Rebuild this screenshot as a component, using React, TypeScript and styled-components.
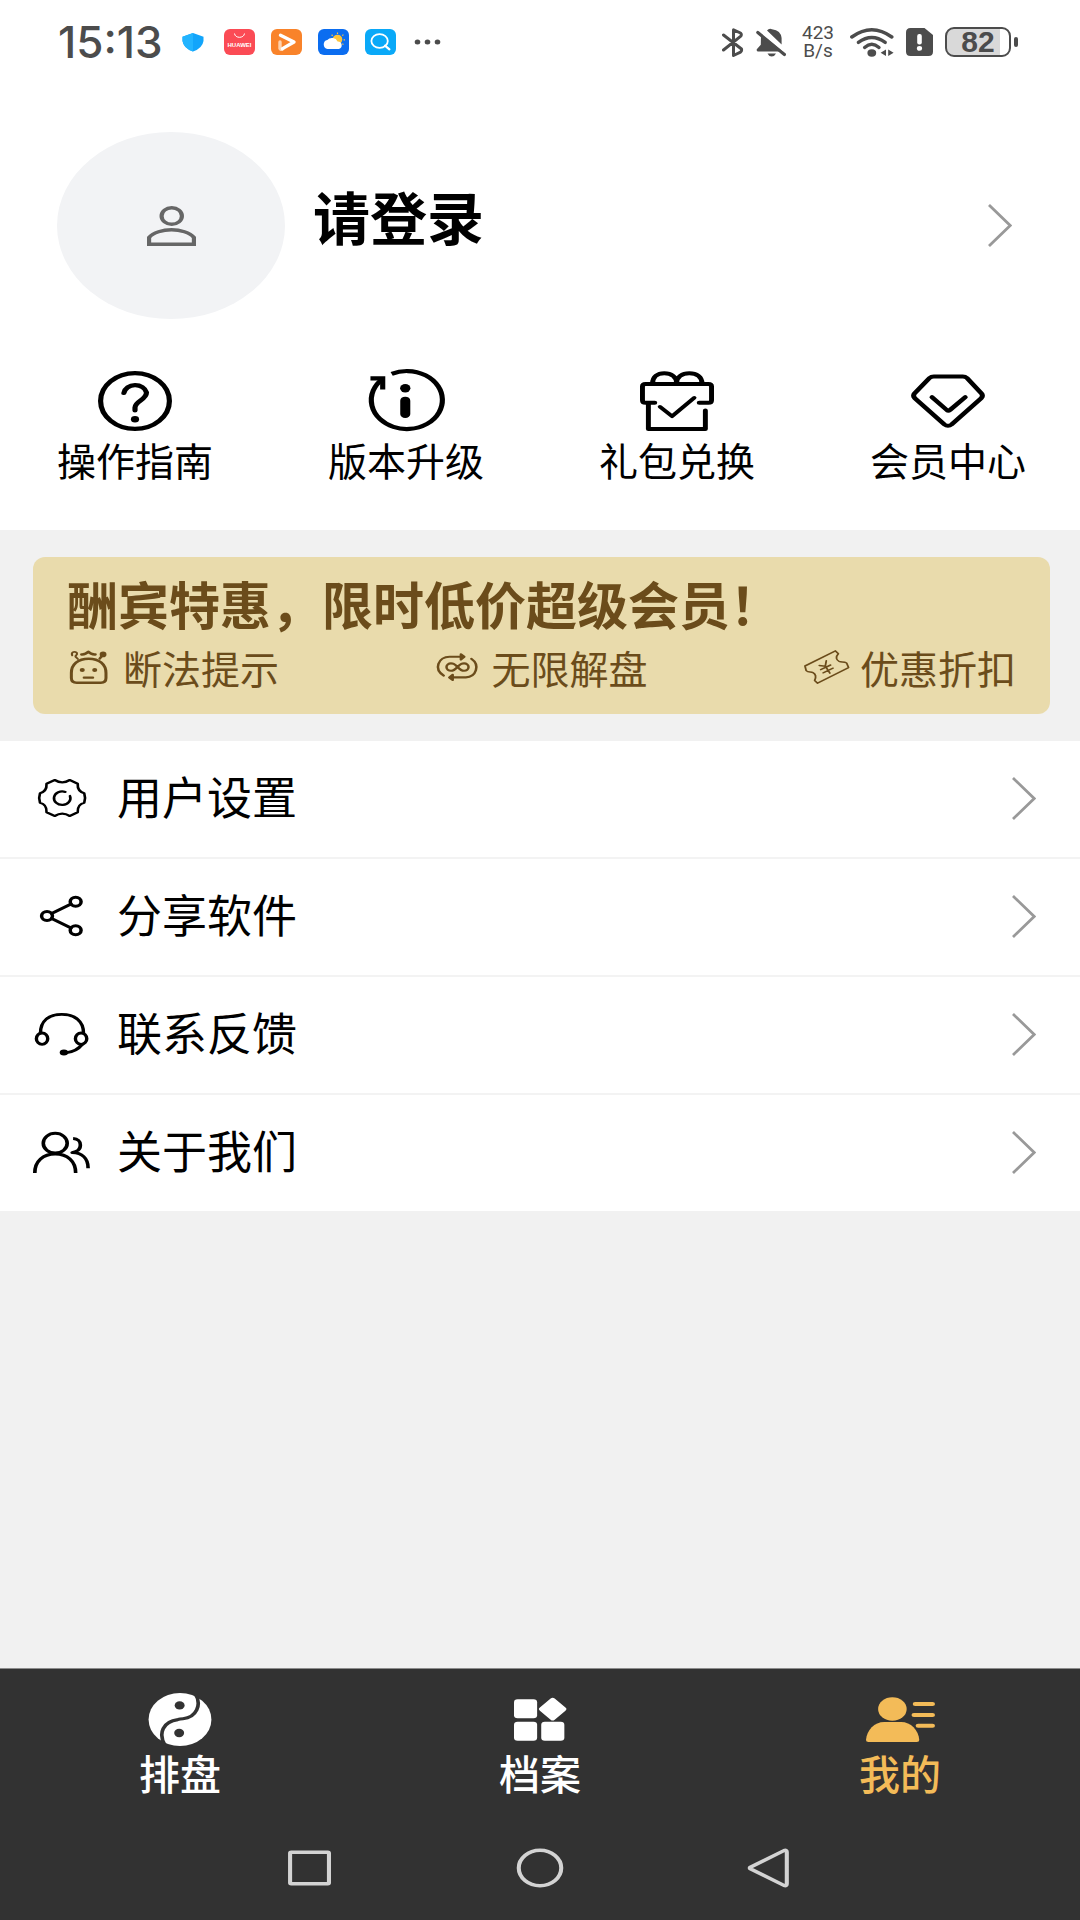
import React from "react";
import styled, { createGlobalStyle } from "styled-components";

const cjk = `"Noto Sans CJK SC", "Noto Sans", sans-serif`;

const GlobalStyle = createGlobalStyle`
  *, *::before, *::after { box-sizing: border-box; }
  body { margin: 0; background: #f1f1f1; font-family: ${cjk}; color: #000; }
  button { appearance: none; border: 0; margin: 0; padding: 0; background: none; font: inherit; color: inherit; cursor: pointer; }
  a { color: inherit; text-decoration: none; }
  svg { display: block; flex: none; }
`;

const Page = styled.div`
  min-height: 100vh;
  display: flex;
  flex-direction: column;
`;

const Header = styled.header`
  background: #fff;
`;

const StatusBar = styled.div`
  height: 84px;
  padding: 0 62px 0 58px;
  display: flex;
  justify-content: space-between;
  align-items: center;
  color: #4c4c4c;
`;

const StatusGroup = styled.div<{ $gap: number }>`
  display: flex;
  align-items: center;
  gap: ${(p) => p.$gap}px;
`;

const Clock = styled.time`
  margin-right: 3px;
  font: 500 44px/44px Inter, Roboto, sans-serif;
`;

const Speed = styled.div`
  width: 40px;
  font: 400 19px/18px Roboto, sans-serif;
  text-align: center;
`;

const SpeedLine = styled.div`
  height: 18px;
`;

const BatteryWrap = styled.div`
  display: flex;
  align-items: center;
  gap: 3px;
  &::after {
    content: "";
    width: 4px;
    height: 10px;
    border-radius: 2px;
    background: #4c4c4c;
  }
`;

const Battery = styled.div`
  width: 66px;
  height: 30px;
  border: 2px solid #4c4c4c;
  border-radius: 9px;
  background: linear-gradient(90deg, #d9d9d9 86%, #fff 86%);
  font: 700 30px/26px "Liberation Sans", sans-serif;
  text-align: center;
`;

const Profile = styled.button`
  width: 100%;
  padding: 48px 68px 0 57px;
  display: flex;
  align-items: center;
  gap: 28px;
  text-align: left;
`;

const Avatar = styled.span`
  width: 228px;
  height: 187px;
  border-radius: 50%;
  background: #f2f3f5;
  color: #666;
  display: flex;
  align-items: center;
  justify-content: center;
`;

const LoginText = styled.span`
  flex: 1;
  padding-bottom: 22px;
  font-size: 57px;
  line-height: 64px;
  font-weight: 700;
`;

const QuickActions = styled.nav`
  padding: 52px 54px 49px 57px;
  display: flex;
  justify-content: space-between;
`;

const QuickAction = styled.button`
  display: flex;
  flex-direction: column;
  align-items: center;
  gap: 6px;
  font-size: 39px;
  line-height: 44px;
`;

const BannerWrap = styled.section`
  padding: 27px 30px 27px 33px;
`;

const Banner = styled.a`
  display: block;
  padding: 16px 34px 25px;
  border-radius: 12px;
  background: #e9dbac;
  color: #6b4c1b;
`;

const BannerTitle = styled.h2`
  margin: 0 0 12px;
  font-size: 51px;
  line-height: 60px;
  font-weight: 700;
  white-space: nowrap;
`;

const Features = styled.ul`
  margin: 0;
  padding: 0;
  list-style: none;
  display: flex;
  justify-content: space-between;
`;

const Feature = styled.li`
  display: flex;
  align-items: center;
  gap: 10px;
  font-size: 39px;
  line-height: 44px;
`;

const Menu = styled.nav`
  background: #fff;
`;

const MenuRow = styled.button`
  width: 100%;
  height: 118px;
  padding: 0 44px 2px 33px;
  display: flex;
  align-items: center;
  gap: 26px;
  text-align: left;
  border-bottom: 2px solid #f3f3f3;
  &:last-child {
    height: 116px;
    border-bottom: 0;
  }
`;

const MenuLabel = styled.span`
  flex: 1;
  padding-bottom: 4px;
  font-size: 45px;
  line-height: 52px;
`;

const Spacer = styled.main`
  flex: 1;
`;

const BottomBar = styled.footer`
  background: #323232;
  border-top: 1px solid #8c8c8c;
`;

const Tabs = styled.nav`
  display: flex;
  padding-top: 23px;
`;

const Tab = styled.a<{ $active?: boolean }>`
  flex: 1;
  display: flex;
  flex-direction: column;
  align-items: center;
  gap: 2px;
  font-size: 41px;
  line-height: 48px;
  font-weight: 500;
  color: ${(p) => (p.$active ? "#f3bb58" : "#fff")};
`;

const TabIcon = styled.span`
  height: 54px;
  display: flex;
  align-items: center;
`;

const SystemNav = styled.div`
  display: flex;
  justify-content: center;
  gap: 182px;
  padding: 52px 0 32px;
  color: #d3d3d3;
`;

type IconProps = {
  w: number;
  h: number;
  box: string;
  stroke?: number;
  children: React.ReactNode;
};

/* Line icon; the drawing fills its box, so the artwork is wider than tall. */
const Line = ({ w, h, box, stroke = 2, children }: IconProps) => (
  <svg
    width={w}
    height={h}
    viewBox={box}
    preserveAspectRatio="none"
    fill="none"
    stroke="currentColor"
    strokeWidth={stroke}
    strokeLinecap="round"
    strokeLinejoin="round"
    overflow="visible"
    aria-hidden="true"
  >
    {children}
  </svg>
);

const Solid = ({ w, h, box, children }: IconProps) => (
  <svg width={w} height={h} viewBox={box} preserveAspectRatio="none" fill="currentColor" aria-hidden="true">
    {children}
  </svg>
);

const Chevron = () => (
  <svg width="24" height="43" viewBox="0 0 24 43" fill="none" stroke="#999" strokeWidth="2.8" aria-hidden="true">
    <path d="M1 1 L22.2 21.5 L1 42" />
  </svg>
);

const quickActions = [
  {
    label: "操作指南",
    icon: (
      <Line w={74} h={60} box="0 0 60 60" stroke={4.2}>
        <circle cx="30" cy="30" r="27.9" />
        <path d="M21 22 A9.3 9.3 0 0 1 39.3 21.5 C39.3 29 30 30 30 36.5 V39.5" />
        <circle cx="30" cy="48.3" r="3.3" fill="currentColor" stroke="none" />
      </Line>
    ),
  },
  {
    label: "版本升级",
    icon: (
      <Line w={76} h={60} box="1 0 62 60" stroke={4.2}>
        <path d="M20.3 2.8 A29 29 0 1 1 12.5 8.2" strokeLinecap="butt" />
        <path d="M3 7.3 H13 V18.5" strokeLinecap="butt" strokeLinejoin="miter" />
        <circle cx="31.4" cy="17.3" r="4.2" fill="currentColor" stroke="none" />
        <rect x="27.3" y="25.7" width="8.2" height="21.3" rx="4" fill="currentColor" stroke="none" />
      </Line>
    ),
  },
  {
    label: "礼包兑换",
    icon: (
      <Line w={74} h={60} box="0 0 60 60" stroke={4}>
        <path d="M10.2 12.5 C10.2 6 14 2.2 19.7 2.2 S29.7 6 29.7 12 C29.7 6 34 2.2 40 2.2 S50.3 6 50.3 12.5" />
        <path d="M12 31.7 H4.5 Q2 31.7 2 29.2 V15.5 Q2 13 4.5 13 H55.5 Q58 13 58 15.5 V29.2 Q58 31.7 55.5 31.7 H48" />
        <path d="M6.8 32 V58 H53 V39.5" />
        <path d="M16.2 35.8 L26 45.3 L44 26.8" strokeWidth="3.6" />
      </Line>
    ),
  },
  {
    label: "会员中心",
    icon: (
      <Line w={74} h={60} box="0 0 60 60" stroke={4}>
        <path d="M18.5 5.5 H42 Q44 5.5 45.4 7 L57 22.2 Q58.8 24.7 57 27.2 L33 53.3 Q30 56.3 27 53.3 L3 27.2 Q1.2 24.7 3 22.2 L15 7 Q16.4 5.5 18.5 5.5 Z" />
        <path d="M17 26.2 L29 39 Q30.3 40.2 31.6 39 L44 26.2" />
      </Line>
    ),
  },
];

const features = [
  {
    label: "断法提示",
    icon: (
      <Line w={46} h={34} box="-2 0 38 34" stroke={2.5}>
        <path d="M1.6 23 C1.6 14.5 7 8.8 15.9 8.8 S30.2 14.5 30.2 23 V28 Q30.2 32.7 26 32.7 H6 Q1.6 32.7 1.6 28 Z" />
        <path d="M12 27.7 H19.4" strokeWidth="2.2" />
        <circle cx="10.6" cy="20" r="2.1" fill="currentColor" stroke="none" />
        <circle cx="20.9" cy="20" r="2.1" fill="currentColor" stroke="none" />
        <path d="M2.3 5.4 C1 2 5 .8 6.2 3 C7 5 4.6 5.4 5 6.6 L7 9" strokeWidth="1.7" />
        <circle cx="27.8" cy="4.4" r="2.8" fill="currentColor" stroke="none" />
        <path d="M27.5 5 L25 8.6" strokeWidth="2.2" />
        <path d="M10 4.4 Q13.5 4.6 15.6 1.8 Q17.7 4.6 21.4 4.4" />
      </Line>
    ),
  },
  {
    label: "无限解盘",
    icon: (
      <Line w={46} h={34} box="-2 0 38 34" stroke={2.1}>
        <path d="M5.2 25.6 C-3.5 19 .8 6.8 10 6.8 H21.5" />
        <path d="M19.4 4.2 L22.2 6.8 L19.4 9.6 Z" fill="currentColor" />
        <path d="M28 8.8 C35.5 15 32 27 23.5 27.4 H11" />
        <path d="M12.6 24.8 L9.8 27.4 L12.6 30 Z" fill="currentColor" />
        <path d="M16.6 17 C13.8 13.4 12.8 13.4 11.2 13.4 A3.7 3.7 0 0 0 11.2 20.8 C12.8 20.8 13.8 20.6 16.6 17 C19.4 13.4 20.4 13.4 22 13.4 A3.7 3.7 0 0 1 22 20.8 C20.4 20.8 19.4 20.6 16.6 17 Z" />
      </Line>
    ),
  },
  {
    label: "优惠折扣",
    icon: (
      <Line w={46} h={34} box="0 0 38 34" stroke={1.5}>
        <path d="M.8 16 L26 .9 L28.4 3.8 C25.8 7 26.6 10 29 11.4 C31 12.4 33 11.2 35.2 13 L36.8 17.6 L11.2 33.2 L8.8 30.4 C10.4 26.5 9.4 24 7.4 22.6 C5.6 21.4 3.6 22.8 1.8 20.6 Z" />
        <path d="M12.6 15.4 L17.6 16.2 L18.4 10.8 M17.6 16.2 L21.4 23.2 M13.8 19.6 L22 15 M15.8 22.8 L24 18.2" />
      </Line>
    ),
  },
];

const menu = [
  {
    label: "用户设置",
    icon: (
      <Line w={58} h={44} box="0 0 48 44" stroke={2.2}>
        <g transform="translate(4 3)">
          <path d="M14 1 Q20.2 5.6 26.4 1 L33 4.8 Q32.6 12.4 38.4 14.2 Q39.8 19 38.4 23.8 Q32.6 25.6 33 33.2 L26.4 37 Q20.2 32.4 14 37 L7.2 33.2 Q7.6 25.6 1.8 23.8 Q.4 19 1.8 14.2 Q7.6 12.4 7.2 4.8 Z" />
          <path d="M22.8 12.9 A6.8 6.8 0 1 0 26.6 17" />
        </g>
      </Line>
    ),
  },
  {
    label: "分享软件",
    icon: (
      <Line w={58} h={44} box="0 0 48 44" stroke={2.9}>
        <circle cx="11.6" cy="22" r="4.5" />
        <circle cx="35.3" cy="7.7" r="4.5" />
        <circle cx="35.3" cy="36.3" r="4.5" />
        <path d="M15.4 19.6 L31.5 10 M15.4 24.4 L31.5 34" />
      </Line>
    ),
  },
  {
    label: "联系反馈",
    icon: (
      <Line w={58} h={44} box="0 0 48 44" stroke={2.8}>
        <ellipse cx="7.5" cy="26.7" rx="4.7" ry="5.7" />
        <ellipse cx="39.8" cy="26.7" rx="4.7" ry="5.7" />
        <path d="M6.2 21 C6.2 9 13 2.3 23.8 2.3 S41.8 9 41.8 21" />
        <path d="M40.8 32.4 Q36 39.5 28 40.6" />
        <ellipse cx="25.6" cy="40.4" rx="3.5" ry="3" fill="currentColor" stroke="none" />
      </Line>
    ),
  },
  {
    label: "关于我们",
    icon: (
      <Line w={58} h={44} box="0 0 48 44" stroke={3}>
        <circle cx="18.4" cy="13.2" r="9.9" />
        <g strokeLinecap="butt">
          <path d="M1.5 43 C1.5 31 8.5 24 18.4 24 S35.3 31 35.3 43" />
          <path d="M33.2 8.6 C37 8.8 39.2 11.4 39.2 15 C39.2 20 36.5 21.4 32.4 22.6 C40.4 23 45.6 28 45.6 38.2" />
        </g>
      </Line>
    ),
  },
];

const tabs = [
  {
    label: "排盘",
    active: false,
    icon: (
      <Solid w={64} h={53} box="0 0 54 53">
        <circle cx="27" cy="26.5" r="26.5" />
        <path d="M39.6 0 C46 12 40.5 24.6 29.5 25.8 C27.8 26 26.6 26.2 25.2 26.6 C13 28.4 8 40 14.6 53" fill="none" stroke="#323232" strokeWidth="3.1" />
        <circle cx="26.7" cy="12.4" r="4.2" fill="#323232" />
        <circle cx="26.3" cy="40" r="4.2" fill="#323232" />
      </Solid>
    ),
  },
  {
    label: "档案",
    active: false,
    icon: (
      <Solid w={53} h={44} box="0 0 44 44">
        <rect x="0" y="2.3" width="19.2" height="19" rx="3" />
        <rect x="0" y="24.8" width="19.2" height="19" rx="3" />
        <rect x="22.6" y="24.8" width="19.2" height="19" rx="3" />
        <rect x="23.4" y="3.4" width="17.4" height="17.4" rx="2.4" transform="rotate(45 32.1 12.1)" />
      </Solid>
    ),
  },
  {
    label: "我的",
    active: true,
    icon: (
      <Solid w={69} h={45} box="0 0 57 45">
        <circle cx="21.8" cy="12" r="11.8" />
        <path d="M0 43 C.6 33 7 25 15 25 H29 C37 25 43.4 33 44 43 Q44 45 42 45 H2 Q0 45 0 43 Z" />
        <rect x="38.6" y="5" width="18.4" height="4" rx="2" />
        <rect x="37.6" y="16" width="19.4" height="4" rx="2" />
        <rect x="41" y="26.7" width="16" height="4" rx="2" />
      </Solid>
    ),
  },
];

const Notifications = () => (
  <>
    <svg width="26" height="19" viewBox="0 0 26 19" aria-hidden="true">
      <path d="M11 0 L21.5 3.8 V8 Q20.6 15 11 18.6 Q1.4 15 .5 8 V3.8 Z" fill="#12a5fb" />
      <path d="M11 0 L.5 3.8 V8 Q1.4 15 11 18.6 Z" fill="#22b4ff" />
    </svg>
    <svg width="31" height="26" viewBox="0 0 31 26" role="img" aria-label="HUAWEI">
      <rect width="31" height="26" rx="6" fill="#fb4b55" />
      <path d="M10.5 4.5 C11 9.6 20 9.6 20.5 4.5" fill="none" stroke="#fff" strokeWidth="1" />
      <text x="15.5" y="17.5" fill="#fff" textAnchor="middle" fontFamily="Liberation Sans, sans-serif" fontSize="6" fontWeight="700">
        HUAWEI
      </text>
    </svg>
    <svg width="31" height="26" viewBox="0 0 31 26" fill="none" strokeLinecap="round" strokeLinejoin="round" aria-hidden="true">
      <rect width="31" height="26" rx="6" fill="#f9832a" />
      <path d="M9 13 V19.5 Q9.5 21 11.5 20" stroke="#ffd2ad" strokeWidth="3.4" />
      <path d="M9.5 6.2 L23 13 L11.5 19.6" stroke="#fff" strokeWidth="3.4" />
    </svg>
    <svg width="31" height="26" viewBox="0 0 31 26" aria-hidden="true">
      <rect width="31" height="26" rx="6" fill="#0b6df0" />
      <circle cx="19.5" cy="10.5" r="4.8" fill="#fdc43a" />
      <path d="M19.5 3.6 V5 M13.6 5.8 L14.7 6.8 M25.4 5.6 L24.3 6.7 M27 10.8 H25.6 M25.4 15.6 L24.4 14.6" stroke="#fdc43a" strokeWidth="1.2" />
      <path d="M9.5 20 A4.6 4.6 0 0 1 9.3 11 A6 5.4 0 0 1 19.6 12.4 A3.9 3.9 0 0 1 21 20 Z" fill="#fff" />
    </svg>
    <svg width="31" height="26" viewBox="0 0 31 26" fill="none" aria-hidden="true">
      <rect width="31" height="26" rx="6" fill="#0aa9f8" />
      <ellipse cx="14.6" cy="12" rx="8.2" ry="6.9" stroke="#fff" strokeWidth="1.8" />
      <path d="M20 16.6 L24.4 20.4" stroke="#fff" strokeWidth="2.2" strokeLinecap="round" />
    </svg>
    <svg width="30" height="6" viewBox="0 0 30 6" fill="#4c4c4c" aria-hidden="true">
      <ellipse cx="5.5" cy="3" rx="2.8" ry="2.5" />
      <ellipse cx="15.5" cy="3" rx="2.8" ry="2.5" />
      <ellipse cx="25.5" cy="3" rx="2.8" ry="2.5" />
    </svg>
  </>
);

const Bluetooth = () => (
  <svg width="22" height="29" viewBox="0 0 22 29" fill="none" stroke="currentColor" strokeWidth="3" strokeLinejoin="round" strokeLinecap="round" aria-hidden="true">
    <path d="M1.5 7 L19.5 21 Q20 23 18.5 24.2 L11.5 27.5 V1.8 L18.5 5 Q20.2 6.8 18.5 8.4 L1.5 22" />
  </svg>
);

const MutedBell = () => (
  <svg width="30" height="29" viewBox="0 0 30 29" fill="currentColor" aria-hidden="true">
    <path d="M11 2.6 Q13 0 16 1.2 Q25 2.5 25.6 10 V16.6 Z" />
    <path d="M5 7 L24 23.4 H1.6 Q0 22.4 1 21 L4.8 16.8 Z" />
    <path d="M11.5 25.6 H20 Q18.5 28.6 15.7 28.6 T11.5 25.6 Z" />
    <path d="M1.8 4.5 L28.4 26.6" stroke="currentColor" strokeWidth="3.2" strokeLinecap="round" />
    <path d="M5.5 3.6 L27.5 21.9" stroke="#fff" strokeWidth="2" />
  </svg>
);

const Wifi = () => (
  <svg width="44" height="29" viewBox="0 0 44 29" fill="none" stroke="currentColor" strokeWidth="3.4" strokeLinecap="round" aria-hidden="true">
    <path d="M1.8 9 Q21.8 -5.5 41.8 9" />
    <path d="M8.4 14.4 Q21.8 4.5 35.2 14.4" />
    <path d="M14.6 19.4 Q21.8 13 29 19.4" />
    <ellipse cx="21.8" cy="25" rx="4.4" ry="3.7" fill="currentColor" stroke="none" />
    <path d="M36 21.4 V28 L30.6 24.7 Z M38.2 21.4 V28 L43.6 24.7 Z" fill="currentColor" stroke="none" />
  </svg>
);

const SimAlert = () => (
  <svg width="27" height="28" viewBox="0 0 27 28" aria-hidden="true">
    <path d="M4.5 0 H18.5 L27 7 V23.5 Q27 28 22.5 28 H4.5 Q0 28 0 23.5 V4.5 Q0 0 4.5 0 Z" fill="currentColor" />
    <rect x="11.2" y="6" width="4.6" height="10.5" rx="2" fill="#fff" />
    <ellipse cx="13.5" cy="20.4" rx="2.6" ry="2.3" fill="#fff" />
  </svg>
);

export default function App() {
  return (
    <Page>
      <GlobalStyle />
      <Header>
        <StatusBar>
          <StatusGroup $gap={16}>
            <Clock>15:13</Clock>
            <Notifications />
          </StatusGroup>
          <StatusGroup $gap={12}>
            <Bluetooth />
            <MutedBell />
            <Speed>
              <SpeedLine>423</SpeedLine>
              <SpeedLine>B/s</SpeedLine>
            </Speed>
            <Wifi />
            <SimAlert />
            <BatteryWrap>
              <Battery>82</Battery>
            </BatteryWrap>
          </StatusGroup>
        </StatusBar>

        <Profile type="button">
          <Avatar>
            <Line w={49} h={40} box="0 0 40 40" stroke={3.4}>
              <circle cx="20.2" cy="10" r="8.3" />
              <path d="M1.7 38.3 V31.5 C5 26.5 13 23.8 20 23.8 S35 26.5 38.3 31.5 V38.3 Z" strokeLinejoin="miter" />
            </Line>
          </Avatar>
          <LoginText>请登录</LoginText>
          <Chevron />
        </Profile>

        <QuickActions aria-label="快捷功能">
          {quickActions.map((a) => (
            <QuickAction key={a.label} type="button">
              {a.icon}
              {a.label}
            </QuickAction>
          ))}
        </QuickActions>
      </Header>

      <BannerWrap>
        <Banner href="#vip">
          <BannerTitle>酬宾特惠，限时低价超级会员！</BannerTitle>
          <Features>
            {features.map((f) => (
              <Feature key={f.label}>
                {f.icon}
                {f.label}
              </Feature>
            ))}
          </Features>
        </Banner>
      </BannerWrap>

      <Menu>
        {menu.map((m) => (
          <MenuRow key={m.label} type="button">
            {m.icon}
            <MenuLabel>{m.label}</MenuLabel>
            <Chevron />
          </MenuRow>
        ))}
      </Menu>

      <Spacer />

      <BottomBar>
        <Tabs>
          {tabs.map((t) => (
            <Tab key={t.label} href={`#${t.label}`} $active={t.active} aria-current={t.active ? "page" : undefined}>
              <TabIcon>{t.icon}</TabIcon>
              {t.label}
            </Tab>
          ))}
        </Tabs>
        <SystemNav>
          <button type="button" aria-label="最近任务">
            <Line w={48} h={40} box="0 0 40 40" stroke={3.4}>
              <rect x="3.4" y="4.2" width="32.4" height="31.6" rx="1" />
            </Line>
          </button>
          <button type="button" aria-label="主屏幕">
            <Line w={48} h={40} box="0 0 40 40" stroke={3.4}>
              <circle cx="20" cy="20" r="17.7" />
            </Line>
          </button>
          <button type="button" aria-label="返回">
            <Line w={48} h={40} box="0 0 40 40" stroke={3.4}>
              <path d="M3.6 19.2 L31.6 2.6 Q34 1.6 34 4 V36 Q34 38.4 31.6 37.4 L3.6 20.8 Q2.6 20 3.6 19.2 Z" />
            </Line>
          </button>
        </SystemNav>
      </BottomBar>
    </Page>
  );
}
